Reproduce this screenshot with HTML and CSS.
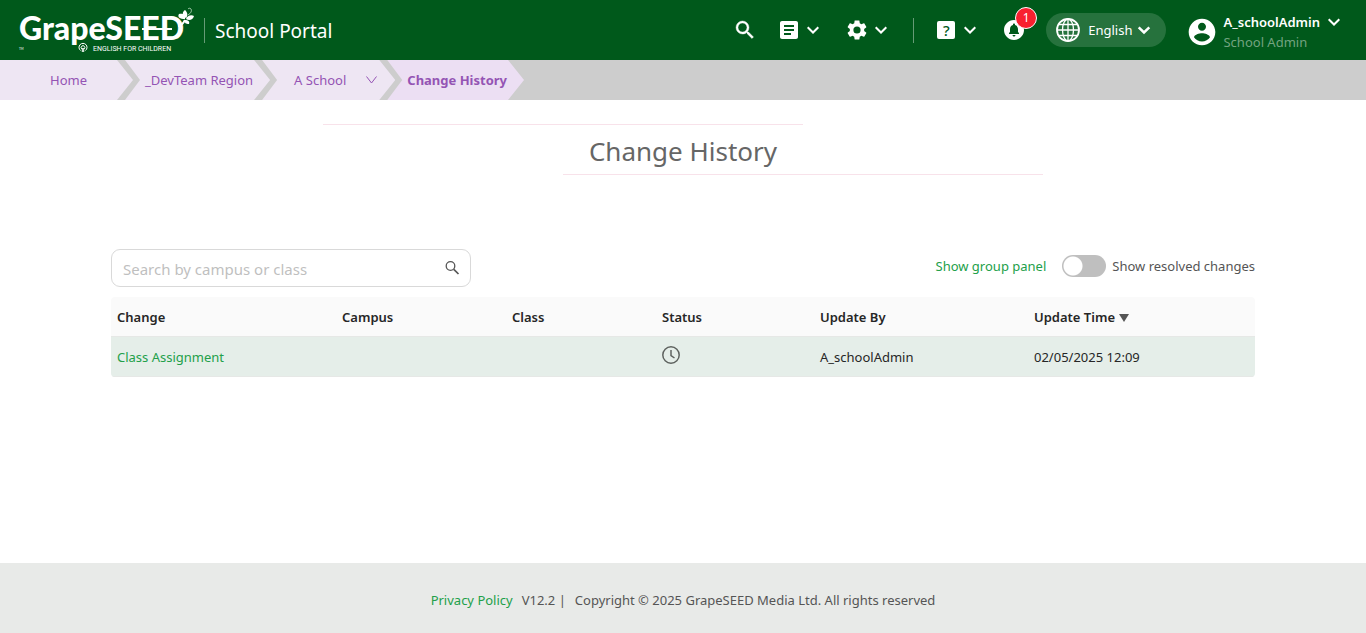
FILE: index.html
```html
<!DOCTYPE html>
<html lang="en">
<head>
    <meta charset="UTF-8">
    <meta name="viewport" content="width=device-width, initial-scale=1.0">
    <title>Change History - School Portal</title>
    <link rel="stylesheet" href="styles.css">
</head>
<body>
    <!-- icons used more than once -->
    <svg class="sprite" aria-hidden="true">
        <symbol id="arrow" viewBox="0 0 24 24"><path d="M6.700 9.300l5.300 5.200 5.300-5.200" fill="none" stroke="currentColor" stroke-width="2"/></symbol>
    </svg>

    <header class="topbar">
        <a href="#" class="logo" aria-label="GrapeSEED English for Children">
            <svg width="176" height="48" viewBox="0 0 176 48">
                <text x="1" y="34" class="logo-name">GrapeSEED</text>
                <text x="1" y="44" class="logo-tm">TM</text>
                <text x="75" y="45" class="logo-sub">ENGLISH FOR CHILDREN</text>
                <!-- bar through the last letters -->
                <path d="M124 23h30" fill="none" stroke="#fff" stroke-width="2"/>
                <!-- small tree -->
                <g fill="none" stroke="#fff">
                    <path d="M62.500 44.500a4 4 0 1 1 5 0M64 43a1.800 1.800 0 1 1 2 0" stroke-width="1"/>
                    <path d="M64.300 42v4M65.700 42v4" stroke-width="1"/>
                </g>
                <!-- vine and leaves -->
                <path d="M160 20c3 0 5-2 7-6" fill="none" stroke="#fff" stroke-width="2"/>
                <path d="M167 13c-5 0-8-2-6-5 4-1 7 1 6 5zM168 12c-4-3-4-6-1-8 3 3 3 6 1 8zM168 13c1-3 5-5 8-3-1 4-5 5-8 3zM167 14c3 0 5 1 4 4-3 0-5-1-4-4z" fill="#fff"/>
                <path d="M170 9c3-2 4-4 3-6-1-1-2-1-3 0" fill="none" stroke="#a8cfae" stroke-width="1"/>
            </svg>
        </a>
        <span class="divider"></span>
        <span class="portal">School Portal</span>

        <nav class="tools">
            <button class="icon-btn" aria-label="Search">
                <svg class="icon" viewBox="0 0 24 24"><path d="M15.500 14h-.79l-.28-.27A6.471 6.471 0 0 0 16 9.500 6.500 6.500 0 1 0 9.500 16c1.610 0 3.090-.59 4.230-1.570l.27.28v.79l5 4.990L20.490 19l-4.990-5zm-6 0C7.010 14 5 11.990 5 9.500S7.010 5 9.500 5 14 7.010 14 9.500 11.990 14 9.500 14z" stroke="currentColor" stroke-width=".4"/></svg>
            </button>
            <button class="icon-btn" aria-label="Reports">
                <svg class="icon" viewBox="0 0 24 24"><path d="M19 3H5c-1.100 0-2 .9-2 2v14c0 1.100.9 2 2 2h14c1.100 0 2-.9 2-2V5c0-1.100-.9-2-2-2zm-5 14H7v-2h7v2zm3-4H7v-2h10v2zm0-4H7V7h10v2z"/></svg>
                <svg class="icon"><use href="#arrow"/></svg>
            </button>
            <button class="icon-btn" aria-label="Settings">
                <svg class="icon" viewBox="0 0 24 24"><path d="M19.140 12.940c.04-.3.060-.61.060-.94 0-.32-.02-.64-.07-.94l2.030-1.580c.18-.14.23-.41.120-.61l-1.920-3.320c-.12-.22-.37-.29-.59-.22l-2.390.96c-.5-.38-1.030-.7-1.620-.94l-.36-2.540c-.04-.24-.24-.41-.48-.41h-3.840c-.24 0-.43.17-.47.41l-.36 2.540c-.59.24-1.130.57-1.620.94l-2.390-.96c-.22-.08-.47 0-.59.22L2.740 8.870c-.12.21-.08.47.12.61l2.030 1.580c-.05.3-.09.63-.09.94s.02.64.07.94l-2.030 1.580c-.18.14-.23.41-.12.61l1.920 3.320c.12.22.37.29.59.22l2.390-.96c.5.38 1.030.7 1.620.94l.36 2.540c.05.24.24.41.48.41h3.840c.24 0 .44-.17.47-.41l.36-2.540c.59-.24 1.130-.56 1.620-.94l2.390.96c.22.08.47 0 .59-.22l1.920-3.320c.12-.22.07-.47-.12-.61l-2.010-1.580zM12 15.600A3.600 3.600 0 1 1 12 8.400a3.600 3.600 0 0 1 0 7.200z"/></svg>
                <svg class="icon"><use href="#arrow"/></svg>
            </button>
            <span class="divider"></span>
            <button class="icon-btn" aria-label="Help">
                <span class="help-mark">?</span>
                <svg class="icon"><use href="#arrow"/></svg>
            </button>
            <button class="icon-btn bell" aria-label="Notifications">
                <svg class="icon" viewBox="0 0 24 24"><path d="M12 2C6.480 2 2 6.480 2 12s4.480 10 10 10 10-4.480 10-10S17.520 2 12 2zm0 16.500c-.83 0-1.500-.67-1.500-1.500h3c0 .83-.67 1.500-1.500 1.500zm5-2.500H7v-1l1-1v-2.610C8 9.270 9.030 7.470 11 7v-.5c0-.57.430-1 1-1s1 .43 1 1V7c1.970.47 3 2.280 3 4.390V14l1 1v1z"/></svg>
                <span class="badge">1</span>
            </button>
            <button class="language">
                <svg class="globe" viewBox="0 0 24 24">
                    <circle cx="12" cy="12" r="11" stroke-width="1.800"/>
                    <ellipse cx="12" cy="12" rx="5.500" ry="11"/>
                    <path d="M12 1v22M1 12h22M3 6.500h18M3 17.500h18"/>
                </svg>
                <span>English</span>
                <svg class="icon" viewBox="0 0 24 24"><path d="M6.700 9.300l5.300 5.200 5.300-5.200" fill="none" stroke="currentColor" stroke-width="2.500"/></svg>
            </button>
            <button class="account">
                <svg class="avatar" viewBox="0 0 24 24"><path d="M12 2C6.480 2 2 6.480 2 12s4.480 10 10 10 10-4.480 10-10S17.520 2 12 2zm0 3c1.660 0 3 1.340 3 3s-1.340 3-3 3-3-1.340-3-3 1.340-3 3-3zm0 14.200c-2.500 0-4.710-1.280-6-3.220.03-1.990 4-3.080 6-3.080 1.990 0 5.970 1.090 6 3.080-1.290 1.940-3.500 3.220-6 3.220z"/></svg>
                <span class="who">
                    <span class="name">A_schoolAdmin <svg class="icon"><use href="#arrow"/></svg></span>
                    <span class="role">School Admin</span>
                </span>
            </button>
        </nav>
    </header>

    <nav aria-label="Breadcrumb">
        <ol class="crumbs">
            <li class="home"><a href="#">Home</a></li>
            <li><a href="#">_DevTeam Region</a></li>
            <li class="school">
                <a href="#">A School</a>
                <svg width="11" height="8" viewBox="0 0 11 8"><path d="M.5.500l5 6.500 5-6.500" fill="none" stroke="currentColor"/></svg>
            </li>
            <li class="current">Change History</li>
        </ol>
    </nav>

    <main>
        <h1>Change History</h1>

        <div class="toolbar">
            <div class="search">
                <input type="text" id="search" placeholder="Search by campus or class" aria-label="Search by campus or class">
                <svg width="18" height="18" viewBox="0 0 18 18" fill="none" stroke="#555"><circle cx="7.500" cy="7" r="4.300" stroke-width="1.300"/><path d="M10.800 10.300l4.700 4.700" stroke-width="1.700"/></svg>
            </div>
            <div class="options">
                <a href="#">Show group panel</a>
                <label class="resolved"><input type="checkbox" class="switch" role="switch">Show resolved changes</label>
            </div>
        </div>

        <table>
            <colgroup>
                <col class="col-change">
                <col class="col-campus">
                <col class="col-class">
                <col class="col-status">
                <col class="col-by">
                <col class="col-time">
            </colgroup>
            <thead>
                <tr>
                    <th>Change</th>
                    <th>Campus</th>
                    <th>Class</th>
                    <th>Status</th>
                    <th>Update By</th>
                    <th>Update Time <span class="sort"></span></th>
                </tr>
            </thead>
            <tbody>
                <tr>
                    <td><a href="#">Class Assignment</a></td>
                    <td></td>
                    <td></td>
                    <td><svg class="clock" viewBox="0 0 18 18" fill="none" stroke="#5f6360" stroke-width="1.500"><circle cx="9" cy="9" r="8.200"/><path d="M9 4v5.500l3.500 2.500"/></svg></td>
                    <td>A_schoolAdmin</td>
                    <td>02/05/2025 12:09</td>
                </tr>
            </tbody>
        </table>
    </main>

    <footer>
        <a href="#">Privacy Policy</a>
        <span>V12.2 |</span>
        <span>Copyright © 2025 GrapeSEED Media Ltd. All rights reserved</span>
    </footer>
</body>
</html>
```

FILE: styles.css
```css
* {
    box-sizing: border-box;
}

body {
    margin: 0;
    min-height: 100vh;
    display: flex;
    flex-direction: column;
    font-family: "Noto Sans", "Open Sans", sans-serif;
    font-size: 13px;
    line-height: 20px;
    color: #555;
    background-color: #fff;
}

a {
    color: #22a04a;
    text-decoration: none;
}

button {
    border: none;
    padding: 0;
    background: none;
    color: #fff;
    font: inherit;
    cursor: pointer;
}

.sprite {
    display: none;
}

.icon {
    width: 24px;
    height: 24px;
    fill: currentColor;
    flex: none;
}

/* top bar */
.topbar {
    display: flex;
    align-items: center;
    gap: 10px;
    height: 60px;
    padding: 0 20px 0 18px;
    background-color: #00591b;
    color: #fff;
}

.logo {
    display: flex;
}

.logo text {
    fill: #fff;
    font-family: Lato, sans-serif;
}

.logo .logo-name {
    font-size: 32px;
    font-weight: 900;
}

.logo .logo-sub {
    font-family: Roboto, sans-serif;
    font-size: 7px;
}

.logo .logo-tm {
    font-size: 3px;
}

.divider {
    width: 1px;
    height: 25px;
    background-color: #669b76;
}

.portal {
    padding-top: 2px;
    font-size: 19px;
}

.tools {
    display: flex;
    align-items: center;
    gap: 20px;
    margin-left: auto;
}

.icon-btn {
    display: flex;
    align-items: center;
}

.help-mark {
    width: 18px;
    height: 18px;
    margin: 3px;
    border-radius: 2px;
    background-color: #fff;
    color: #00591b;
    font-size: 15px;
    font-weight: 500;
    line-height: 18px;
    text-align: center;
}

.bell {
    position: relative;
}

.badge {
    position: absolute;
    top: -11px;
    left: 13px;
    width: 22px;
    height: 22px;
    border: 1px solid #fff;
    border-radius: 11px;
    background-color: #f8202f;
    font-size: 12px;
    line-height: 20px;
    text-align: center;
}

.language {
    display: flex;
    align-items: center;
    height: 34px;
    padding: 0 10px;
    border-radius: 17px;
    background-color: #26723d;
}

.language span {
    margin-left: 8px;
}

.globe {
    width: 24px;
    height: 24px;
    fill: none;
    stroke: #fff;
    stroke-width: 1.3;
}

.account {
    display: flex;
    align-items: center;
    gap: 5px;
    padding-top: 3px;
    text-align: left;
}

.avatar {
    width: 32px;
    height: 32px;
    fill: #fff;
}

.who {
    display: flex;
    flex-direction: column;
}

.name {
    display: flex;
    align-items: center;
    gap: 2px;
    height: 20px;
    font-weight: 600;
}

.role {
    color: #73a380;
}

/* breadcrumb */
.crumbs {
    display: flex;
    height: 40px;
    margin: 0;
    padding: 0;
    background-color: #cdcdcd;
    list-style: none;
}

.crumbs li {
    display: flex;
    align-items: center;
    margin-left: -8px;
    padding: 0 17px 0 20px;
    background-color: #eee6f3;
    color: #9454b4;
    clip-path: polygon(0 0, calc(100% - 16px) 0, 100% 50%, calc(100% - 16px) 100%, 0 100%, 15px 50%);
}

.crumbs a {
    color: #9454b4;
}

.crumbs .home {
    margin-left: 0;
    padding: 0 46px 0 50px;
    clip-path: polygon(0 0, calc(100% - 16px) 0, 100% 50%, calc(100% - 16px) 100%, 0 100%);
}

.crumbs .school {
    gap: 20px;
    padding: 0 18px 0 32px;
}

.crumbs .current {
    background-color: #ecdff3;
    font-weight: 700;
}

/* content */
main {
    flex: 1;
    padding: 24px 111px;
}

h1 {
    max-width: 720px;
    height: 51px;
    margin: 0 auto;
    background-image: linear-gradient(#f8e2ea, #f8e2ea), linear-gradient(#f8e2ea, #f8e2ea);
    background-position: left top, right bottom;
    background-repeat: no-repeat;
    background-size: 480px 1px;
    color: #666;
    font-size: 26px;
    font-weight: 400;
    line-height: 54px;
    text-align: center;
}

.toolbar {
    display: flex;
    align-items: center;
    justify-content: space-between;
    margin: 74px 0 10px;
}

.search {
    display: flex;
    align-items: center;
    width: 360px;
    height: 38px;
    padding: 0 9px 0 11px;
    border: 1px solid #d9d9d9;
    border-radius: 9px;
}

.search input {
    flex: 1;
    min-width: 0;
    padding: 2px 0 0;
    border: none;
    outline: none;
    font: inherit;
    font-size: 15px;
}

.search input::placeholder {
    color: #bfbfbf;
}

.options {
    display: flex;
    align-items: center;
    gap: 16px;
    padding-bottom: 4px;
}

.resolved {
    display: flex;
    align-items: center;
    gap: 6px;
}

.switch {
    appearance: none;
    width: 44px;
    height: 22px;
    margin: 0;
    border-radius: 11px;
    background: radial-gradient(circle at 11px 11px, #fff 9px, transparent 10px) #bfbfbf;
}

.switch:checked {
    background: radial-gradient(circle at 33px 11px, #fff 9px, transparent 10px) #22a04a;
}

table {
    width: 100%;
    table-layout: fixed;
    border-spacing: 0;
    border-radius: 4px;
    overflow: hidden;
    color: #262626;
}

.col-change { width: 225px; }
.col-campus { width: 170px; }
.col-class { width: 150px; }
.col-status { width: 158px; }
.col-by { width: 214px; }
.col-time { width: 227px; }

th, td {
    height: 40px;
    padding: 0 6px;
    border-bottom: 1px solid #e6e8e6;
    text-align: left;
}

th {
    background-color: #fafafa;
    font-weight: 600;
}

td {
    background-color: #e5eee9;
}

.clock {
    display: block;
    width: 18px;
    height: 18px;
    margin-bottom: 4px;
}

.sort {
    display: inline-block;
    margin-left: 1px;
    border: 5px solid transparent;
    border-top: 8px solid #555;
    border-bottom: 0;
}

footer {
    display: flex;
    align-items: center;
    justify-content: center;
    gap: 9px;
    height: 70px;
    padding-top: 4px;
    background-color: #e8eae8;
}
```
